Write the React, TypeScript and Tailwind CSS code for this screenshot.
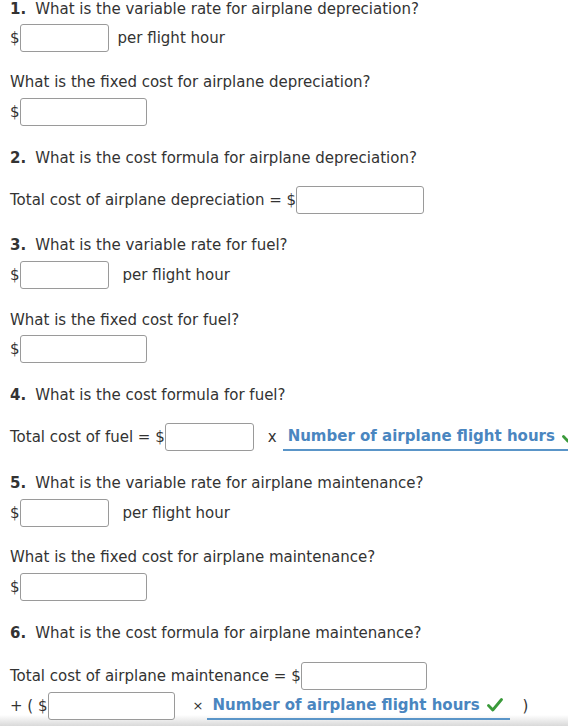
import React from "react";

const Money = ({ w = "w-[89px]" }: { w?: string }) => (
  <span className="inline-flex items-center">
    <span>$</span>
    <span
      className={`${w} h-[28px] rounded-[3px] border border-[#9a9a9a] bg-white inline-block`}
    />
  </span>
);

const Heading = ({ n, text, mt }: { n: number; text: string; mt: string }) => (
  <div className={`${mt} h-[16px] leading-[16px] whitespace-nowrap`}>
    <span className="font-bold">{n}.</span>
    <span className="ml-[9px]">{text}</span>
  </div>
);

const Question = ({ text, mt }: { text: string; mt: string }) => (
  <div className={`${mt} h-[16px] leading-[16px] whitespace-nowrap`}>{text}</div>
);

const Hours = ({ w }: { w: string }) => (
  <span
    className={`${w} shrink-0 inline-flex items-center h-[28px] border-b-2 border-[#5a95c8] pl-[5px] whitespace-nowrap`}
  >
    <span className="font-bold text-[#4a86c0]">Number of airplane flight hours</span>
    <svg width="16" height="14" viewBox="0 0 16 14" className="ml-[7px] shrink-0">
      <path
        d="M1.5 7.5 L5.8 12 L14.5 1.5"
        fill="none"
        stroke="#3a9a3a"
        strokeWidth="2.8"
        strokeLinecap="round"
        strokeLinejoin="round"
      />
    </svg>
  </span>
);

export default function App() {
  return (
    <div
      className="relative w-[568px] h-[726px] overflow-hidden bg-white text-[15px] text-[#333]"
      style={{ fontFamily: '"DejaVu Sans", Verdana, sans-serif' }}
    >
      <div className="relative z-10 pl-[10px] pt-[1px]">
        <Heading n={1} mt="mt-0" text="What is the variable rate for airplane depreciation?" />
        <div className="mt-[7px] flex items-center">
          <Money />
          <span className="ml-[9px]">per flight hour</span>
        </div>
        <Question mt="mt-[22px]" text="What is the fixed cost for airplane depreciation?" />
        <div className="mt-[8px] flex">
          <Money w="w-[127px]" />
        </div>

        <Heading n={2} mt="mt-[24px]" text="What is the cost formula for airplane depreciation?" />
        <div className="mt-[20px] flex items-center whitespace-pre">
          <span>Total cost of airplane depreciation = </span>
          <Money w="w-[128px]" />
        </div>

        <Heading n={3} mt="mt-[23px]" text="What is the variable rate for fuel?" />
        <div className="mt-[8px] flex items-center">
          <Money />
          <span className="ml-[14px]">per flight hour</span>
        </div>
        <Question mt="mt-[23px]" text="What is the fixed cost for fuel?" />
        <div className="mt-[7px] flex">
          <Money w="w-[127px]" />
        </div>

        <Heading n={4} mt="mt-[24px]" text="What is the cost formula for fuel?" />
        <div className="mt-[20px] flex items-center whitespace-pre">
          <span>Total cost of fuel = </span>
          <Money w="w-[89px]" />
          <span className="ml-[14px] mr-[6px]">x</span>
          <Hours w="w-[300px]" />
        </div>

        <Heading n={5} mt="mt-[24px]" text="What is the variable rate for airplane maintenance?" />
        <div className="mt-[8px] flex items-center">
          <Money />
          <span className="ml-[14px]">per flight hour</span>
        </div>
        <Question mt="mt-[22px]" text="What is the fixed cost for airplane maintenance?" />
        <div className="mt-[8px] flex">
          <Money w="w-[127px]" />
        </div>

        <Heading n={6} mt="mt-[24px]" text="What is the cost formula for airplane maintenance?" />
        <div className="mt-[21px] flex items-center whitespace-pre">
          <span>Total cost of airplane maintenance = </span>
          <Money w="w-[126px]" />
        </div>
        <div className="mt-[2px] flex items-center whitespace-pre">
          <span>+ ( </span>
          <Money w="w-[127px]" />
          <span className="ml-[18px] mr-[4px] text-[13px]">×</span>
          <Hours w="w-[303px]" />
          <span className="ml-[12px]">)</span>
        </div>
      </div>
      <div className="absolute bottom-0 left-0 right-0 h-[11px] bg-gradient-to-b from-[#ffffff] to-[#d9d9d9]" />
    </div>
  );
}
